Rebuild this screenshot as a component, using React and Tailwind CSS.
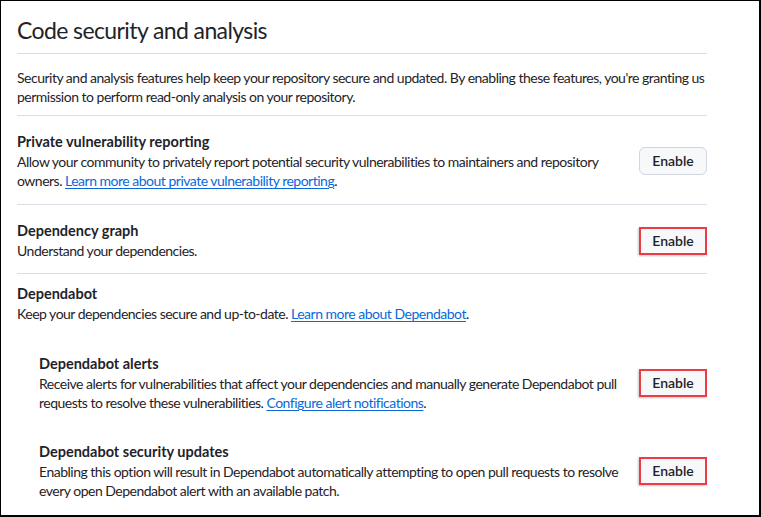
import React from 'react';

const Enable = ({ marked }) => (
  <button
    className={
      marked
        ? 'h-[28px] w-[68px] shrink-0 border-2 border-[#ec3b45] bg-[#f6f8fa] text-sm font-semibold text-[#1f2328] shadow-[-1px_1px_2px_rgba(31,35,40,0.25)]'
        : 'h-[28px] w-[68px] shrink-0 rounded-md border border-[#d0d7de] bg-[#f6f8fa] text-sm font-semibold text-[#1f2328]'
    }
  >
    Enable
  </button>
);

const Link = ({ children }) => (
  <a href="#" className="text-[#0969da] underline underline-offset-2 decoration-1">
    {children}
  </a>
);

const Setting = ({ title, children, marked, plain, indent }) => (
  <div className={`flex items-center gap-2 ${indent ? 'pl-[22px]' : ''}`}>
    <div className="flex-1">
      <h3 className="text-[14.5px] font-bold leading-5">{title}</h3>
      <p className="text-sm leading-[19px] tracking-[-0.5px]">{children}</p>
    </div>
    {!plain && <Enable marked={marked} />}
  </div>
);

export default function App() {
  return (
    <div
      className="h-[517px] w-[761px] overflow-hidden border-t border-l border-r-2 border-b-2 border-black bg-white text-[#1f2328]"
      style={{ fontFamily: '"Segoe UI", Lato, sans-serif' }}
    >
      <div className="ml-[16px] mr-[52px] pt-[11px]">
        <h2 className="border-b border-[#d8dee4] pb-[5px] text-[23px] font-normal leading-9 tracking-[-0.6px]">
          Code security and analysis
        </h2>
        <div className="border-b border-[#d8dee4] pt-[14px] pb-[9px]">
          <p className="mr-[-30px] text-sm leading-[19px] tracking-[-0.5px]">
            Security and analysis features help keep your repository secure and updated. By enabling these features,
            you're granting us permission to perform read-only analysis on your repository.
          </p>
        </div>

        <div className="border-b border-[#d8dee4] pt-4 pb-[14px]">
          <Setting title="Private vulnerability reporting">
            Allow your community to privately report potential security vulnerabilities to maintainers and repository
            owners. <Link>Learn more about private vulnerability reporting</Link>.
          </Setting>
        </div>

        <div className="border-b border-[#d8dee4] pt-4 pb-[13px]">
          <Setting title="Dependency graph" marked>
            Understand your dependencies.
          </Setting>
        </div>

        <div className="pt-[10px]">
          <Setting title="Dependabot" plain>
            Keep your dependencies secure and up-to-date. <Link>Learn more about Dependabot</Link>.
          </Setting>

          <div className="mt-[31px] space-y-[30px]">
            <Setting title="Dependabot alerts" marked indent>
              Receive alerts for vulnerabilities that affect your dependencies and manually generate Dependabot pull
              requests to resolve these vulnerabilities. <Link>Configure alert notifications</Link>.
            </Setting>
            <Setting title="Dependabot security updates" marked indent>
              Enabling this option will result in Dependabot automatically attempting to open pull requests to resolve
              every open Dependabot alert with an available patch.
            </Setting>
          </div>
        </div>
      </div>
    </div>
  );
}
